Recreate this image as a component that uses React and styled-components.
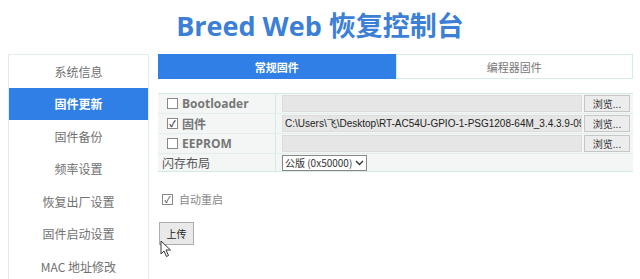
import React from 'react';
import styled, { createGlobalStyle, css } from 'styled-components';

const GlobalStyle = createGlobalStyle`
  body {
    margin: 0;
    background: #ffffff;
    font-family: "Liberation Sans", "Noto Sans CJK SC", sans-serif;
    overflow: hidden;
  }
`;

const Page = styled.div`
  width: 640px;
  height: 279px;
  position: relative;
  overflow: hidden;
`;

const Title = styled.h1`
  margin: 0;
  height: 48px;
  display: flex;
  align-items: center;
  justify-content: center;
  padding-top: 0;
  font-family: "Open Sans", "Noto Sans CJK SC", sans-serif;
  font-size: 27px;
  font-weight: 700;
  color: #3c7fd6;
`;

const Body = styled.div`
  display: flex;
  gap: 9px;
  padding: 6px 7px 0 8px;
`;

const Sidebar = styled.ul`
  list-style: none;
  margin: 0;
  padding: 0;
  width: 139px;
  height: 240px;
  border: 1px solid #e1ecec;
  border-bottom: none;
  flex: none;
`;

const NavItem = styled.li`
  height: 32.5px;
  display: flex;
  align-items: center;
  justify-content: center;
  font-family: "Noto Sans CJK SC", sans-serif;
  font-size: 12px;
  color: #707070;
  ${(p) =>
    p.active &&
    css`
      background: #2f7fe6;
      color: #fff;
      font-weight: 700;
    `}
`;

const Main = styled.div`
  flex: 1;
  min-width: 0;
  display: flex;
  flex-direction: column;
`;

const Tabs = styled.div`
  display: flex;
  height: 25px;
`;

const Tab = styled.div`
  flex: 1;
  display: flex;
  align-items: center;
  justify-content: center;
  font-family: "Noto Sans CJK SC", sans-serif;
  font-size: 11px;
  color: #777;
  border: 1px solid #d6ecea;
  ${(p) =>
    p.active &&
    css`
      background: #2f7fe6;
      border-color: #2f7fe6;
      color: #fff;
      font-weight: 700;
    `}
`;

const Table = styled.div`
  margin-top: 14px;
  border-top: 1px solid #d3ebe5;
  border-bottom: 1px solid #d3ebe5;
  display: grid;
  grid-template-columns: 118px minmax(0, 1fr);
`;

const Label = styled.div`
  height: 19px;
  display: flex;
  align-items: center;
  gap: 4px;
  padding-left: 9px;
  background: #f4f6f5;
  border-bottom: 1px solid #e3efec;
  border-right: 1px solid #d3ebe5;
  font-family: "Open Sans", "Noto Sans CJK SC", sans-serif;
  font-size: 12px;
  font-weight: 700;
  color: #777;
  ${(p) =>
    p.plain &&
    css`
      padding-left: 4px;
      font-weight: 400;
      font-family: "Noto Sans CJK SC", sans-serif;
      color: #555;
    `}
  ${(p) =>
    p.last &&
    css`
      height: 17px;
      border-bottom: none;
    `}
`;

const Cell = styled.div`
  height: 19px;
  min-width: 0;
  display: flex;
  align-items: center;
  gap: 2px;
  padding: 0 3px 0 6px;
  background: #f4f6f5;
  border-bottom: 1px solid #e3efec;
  ${(p) =>
    p.last &&
    css`
      height: 17px;
      border-bottom: none;
    `}
`;

const Box = styled.span`
  width: 9px;
  height: 9px;
  border: 1px solid #888;
  background: #fff;
  display: inline-flex;
  align-items: center;
  justify-content: center;
  flex: none;
  font-size: 9px;
  line-height: 1;
  color: #333;
`;

const FileField = styled.div`
  flex: 1;
  height: 15px;
  background: #e6e6e6;
  border: 1px solid #dcdcdc;
  display: flex;
  align-items: center;
  padding-left: 2px;
  font-family: "Liberation Sans", sans-serif;
  font-size: 10px;
  color: #222;
  white-space: nowrap;
  overflow: hidden;
  min-width: 0;
`;

const Browse = styled.button`
  width: 46px;
  height: 17px;
  padding: 0;
  background: #ececec;
  border: 1px solid #c6c6c6;
  font-family: "Noto Sans CJK SC", sans-serif;
  font-size: 10px;
  color: #333;
  flex: none;
`;

const Select = styled.div`
  height: 14px;
  border: 1px solid #888;
  background: #fff;
  display: flex;
  align-items: center;
  gap: 3px;
  padding: 0 2px;
  font-family: "Noto Sans CJK SC", sans-serif;
  font-size: 10px;
  color: #333;
`;

const Check = styled.label`
  margin-top: 19px;
  margin-left: 4px;
  display: flex;
  align-items: center;
  gap: 6px;
  font-family: "Noto Sans CJK SC", sans-serif;
  font-size: 11px;
  color: #888;
`;

const Upload = styled.button`
  margin-top: 15px;
  margin-left: 1px;
  width: 35px;
  height: 23px;
  padding: 0;
  background: #e9e9e9;
  border: 1px solid #adadad;
  font-family: "Noto Sans CJK SC", sans-serif;
  font-size: 10px;
  color: #222;
  align-self: flex-start;
`;

const Cursor = styled.svg`
  position: absolute;
  left: 160px;
  top: 240px;
`;

const nav = ['系统信息', '固件更新', '固件备份', '频率设置', '恢复出厂设置', '固件启动设置', 'MAC 地址修改'];

const rows = [
  { name: 'Bootloader', checked: false, path: '' },
  { name: '固件', checked: true, path: 'C:\\Users\\飞\\Desktop\\RT-AC54U-GPIO-1-PSG1208-64M_3.4.3.9-099.trx' },
  { name: 'EEPROM', checked: false, path: '' },
];

export default function App() {
  return (
    <Page>
      <GlobalStyle />
      <Title>Breed Web 恢复控制台</Title>
      <Body>
        <Sidebar>
          {nav.map((n, i) => (
            <NavItem key={n} active={i === 1}>
              {n}
            </NavItem>
          ))}
        </Sidebar>
        <Main>
          <Tabs>
            <Tab active>常规固件</Tab>
            <Tab>编程器固件</Tab>
          </Tabs>
          <Table>
            {rows.map((r) => (
              <React.Fragment key={r.name}>
                <Label>
                  <Box>{r.checked ? '✓' : ''}</Box>
                  {r.name}
                </Label>
                <Cell>
                  <FileField>{r.path}</FileField>
                  <Browse>浏览...</Browse>
                </Cell>
              </React.Fragment>
            ))}
            <Label plain last>闪存布局</Label>
            <Cell last>
              <Select>
                公版 (0x50000)
                <svg width="9" height="6" viewBox="0 0 9 6">
                  <path d="M1 1 L4.5 4.5 L8 1" fill="none" stroke="#333" strokeWidth="1.4" />
                </svg>
              </Select>
            </Cell>
          </Table>
          <Check>
            <Box>✓</Box>
            自动重启
          </Check>
          <Upload>上传</Upload>
        </Main>
      </Body>
      <Cursor width="12" height="18" viewBox="0 0 12 18">
        <path d="M1 1 L1 14 L4 11 L6.5 16.5 L8.5 15.5 L6 10 L10.5 10 Z" fill="#fff" stroke="#333" strokeWidth="1" />
      </Cursor>
    </Page>
  );
}
